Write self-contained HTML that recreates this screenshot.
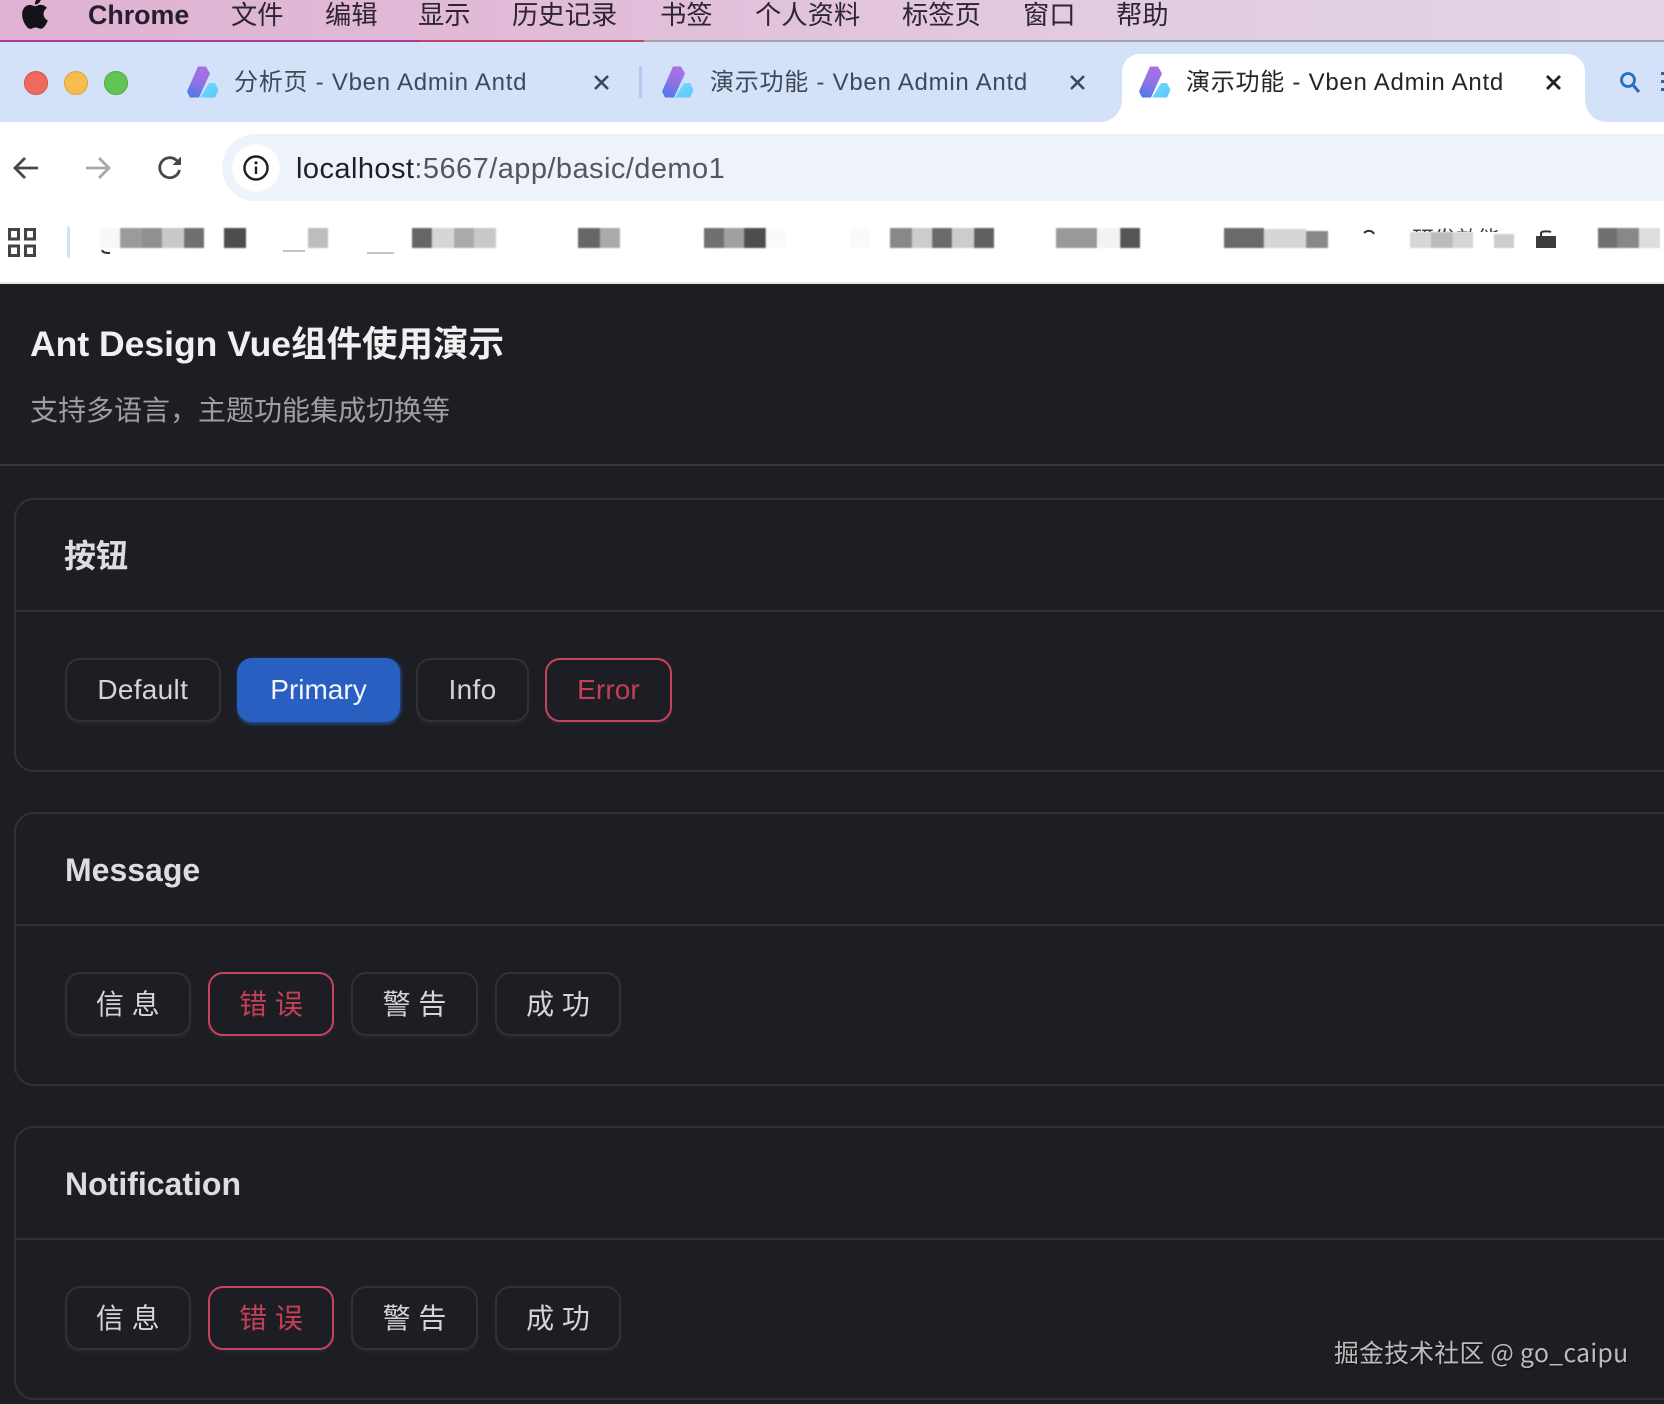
<!DOCTYPE html>
<html lang="zh-CN">
<head>
<meta charset="utf-8">
<title>Ant Design Vue组件使用演示</title>
<style>
html,body{margin:0;padding:0;background:#1c1e23}
#p{position:relative;width:1664px;height:1404px;overflow:hidden;background:#1c1e23;font-family:"Liberation Sans","Noto Sans CJK SC",sans-serif;filter:blur(.35px)}
#p div,#p svg{position:absolute}
.t{white-space:nowrap}
.m{top:-4px;height:38px;line-height:38px;font-size:26.3px;color:#2d2530}
.tab{top:64px;height:38px;line-height:38px;font-size:24px;letter-spacing:.75px;color:#414855}
.btn{box-sizing:border-box;display:flex;align-items:center;justify-content:center;height:64px;border:2px solid #303237;border-radius:15px;color:#d4d5d6;font-size:28px;white-space:pre;box-shadow:0 3px 2px rgba(255,255,255,.035)}
.c{padding-bottom:2px}
.err{border-color:#c9435f;color:#c53f58}
.card{box-sizing:border-box;left:14px;width:1700px;border:2px solid #303237;border-radius:20px}
.line{left:14px;width:1650px;height:2px;background:#303237}
.h{left:65px;height:44px;line-height:44px;font-size:32px;font-weight:700;color:#dcddde;white-space:nowrap}
</style>
</head>
<body>
<div id="p">
  <!-- menu bar -->
  <div style="left:0;top:0;width:1664px;height:41px;background:linear-gradient(90deg,#e0b2d3 0%,#e1bcd8 35%,#e2cde2 70%,#e3d5e7 100%)"></div>
  <div style="left:0;top:40px;width:1664px;height:2px;background:linear-gradient(90deg,#a8379a 0,#a8379a 418px,#c0436d 420px,#c0436d 643px,#a3a3ad 645px,#a3a3ad 100%)"></div>
  <svg style="left:16px;top:-6px" width="38" height="38" viewBox="0 0 24 24"><path fill="#15131a" d="M18.71 19.5c-.83 1.24-1.71 2.45-3.05 2.47-1.34.03-1.77-.79-3.29-.79-1.53 0-2 .77-3.27.82-1.31.05-2.3-1.32-3.14-2.53C4.25 17 2.94 12.45 4.7 9.39c.87-1.52 2.43-2.48 4.12-2.51 1.28-.02 2.5.87 3.29.87.78 0 2.26-1.07 3.81-.91.65.03 2.47.26 3.64 1.98-.09.06-2.17 1.28-2.15 3.81.03 3.02 2.65 4.03 2.68 4.04-.03.07-.42 1.44-1.38 2.83M13 3.5c.73-.83 1.94-1.46 2.94-1.5.13 1.17-.34 2.35-1.04 3.19-.69.85-1.83 1.51-2.95 1.42-.15-1.15.41-2.35 1.05-3.11z"/></svg>
  <div class="t m" style="left:88px;font-weight:700;font-size:26.8px;color:#251f2a">Chrome</div>
  <div class="t m" style="left:231px">文件</div>
  <div class="t m" style="left:325px">编辑</div>
  <div class="t m" style="left:418px">显示</div>
  <div class="t m" style="left:512px">历史记录</div>
  <div class="t m" style="left:660px">书签</div>
  <div class="t m" style="left:755px">个人资料</div>
  <div class="t m" style="left:902px">标签页</div>
  <div class="t m" style="left:1023px">窗口</div>
  <div class="t m" style="left:1116px">帮助</div>

  <!-- tab strip -->
  <div style="left:0;top:42px;width:1664px;height:80px;background:#d3e2f9"></div>
  <div style="left:0;top:122px;width:1664px;height:161px;background:#fff"></div>
  <div style="left:24px;top:71px;width:24px;height:24px;border-radius:50%;background:#ee6a5f;box-shadow:inset 0 0 0 1px #d65a50"></div>
  <div style="left:64px;top:71px;width:24px;height:24px;border-radius:50%;background:#f5bd4f;box-shadow:inset 0 0 0 1px #dca63f"></div>
  <div style="left:104px;top:71px;width:24px;height:24px;border-radius:50%;background:#61c454;box-shadow:inset 0 0 0 1px #52ae46"></div>

  <svg width="0" height="0" style="left:0;top:0"><defs>
    <linearGradient id="g1" x1=".6" y1="0" x2=".3" y2="1"><stop offset="0" stop-color="#ac6fe3"/><stop offset=".5" stop-color="#8f73e6"/><stop offset="1" stop-color="#4f78ea"/></linearGradient>
    <linearGradient id="g2" x1="0" y1="0" x2="1" y2="1"><stop offset="0" stop-color="#72ddff"/><stop offset="1" stop-color="#5cc6fb"/></linearGradient>
  </defs></svg>

  <svg style="left:187px;top:66px" width="32" height="32" viewBox="0 0 32 32"><path fill="url(#g2)" d="M22 17h6l3.5 7-3.5 7.5H13z"/><path fill="url(#g1)" d="M11 .5h8l4 7-11 24H3L0 25.500z"/></svg>
  <div class="t tab" style="left:234px">分析页 - Vben Admin Antd</div>
  <svg style="left:592px;top:73px" width="19" height="19" viewBox="0 0 19 19"><path d="M3 3l13 13M16 3L3 16" stroke="#3f4653" stroke-width="2.6" fill="none"/></svg>
  <div style="left:638.500px;top:66px;width:3px;height:32px;background:#b3c9ee"></div>

  <svg style="left:662px;top:66px" width="32" height="32" viewBox="0 0 32 32"><path fill="url(#g2)" d="M22 17h6l3.500 7-3.500 7.500H13z"/><path fill="url(#g1)" d="M11 .5h8l4 7-11 24H3L0 25.500z"/></svg>
  <div class="t tab" style="left:710px">演示功能 - Vben Admin Antd</div>
  <svg style="left:1068px;top:73px" width="19" height="19" viewBox="0 0 19 19"><path d="M3 3l13 13M16 3L3 16" stroke="#3f4653" stroke-width="2.600" fill="none"/></svg>

  <!-- active tab -->
  <svg style="left:1100px;top:54px" width="510" height="68" viewBox="0 0 510 68"><path fill="#fff" d="M0 68c12 0 22-9 22-24V18C22 8 30 0 40 0h427c10 0 18 8 18 18v26c0 15 10 24 22 24z"/></svg>
  <svg style="left:1138.500px;top:66px" width="32" height="32" viewBox="0 0 32 32"><path fill="url(#g2)" d="M22 17h6l3.500 7-3.500 7.500H13z"/><path fill="url(#g1)" d="M11 .5h8l4 7-11 24H3L0 25.500z"/></svg>
  <div class="t tab" style="left:1186px;color:#23252a">演示功能 - Vben Admin Antd</div>
  <svg style="left:1544px;top:73px" width="19" height="19" viewBox="0 0 19 19"><path d="M3 3l13 13M16 3L3 16" stroke="#1f2126" stroke-width="2.800" fill="none"/></svg>
  <svg style="left:1618px;top:70px" width="24" height="24" viewBox="0 0 24 24"><circle cx="10" cy="10" r="6.500" fill="none" stroke="#2a6cc4" stroke-width="2.800"/><path d="M15 15l6 7" stroke="#2a6cc4" stroke-width="3" fill="none"/></svg>
  <div style="left:1661px;top:72px;width:3px;height:3px;background:#3a5f98"></div>
  <div style="left:1661px;top:80px;width:3px;height:3px;background:#3a5f98"></div>
  <div style="left:1661px;top:88px;width:3px;height:3px;background:#3a5f98"></div>

  <!-- toolbar -->
  <svg style="left:12px;top:155px" width="28" height="26" viewBox="0 0 28 26"><path d="M26 13H4M13 3L3 13l10 10" fill="none" stroke="#45474a" stroke-width="2.800"/></svg>
  <svg style="left:84px;top:155px" width="28" height="26" viewBox="0 0 28 26"><path d="M2 13h22M15 3l10 10-10 10" fill="none" stroke="#a6a8aa" stroke-width="2.800"/></svg>
  <svg style="left:156px;top:154px" width="28" height="28" viewBox="0 0 28 28"><path d="M23.500 16a10 10 0 1 1-2.800-9.500L24 9.500" fill="none" stroke="#45474a" stroke-width="2.800"/><path d="M25 2.500V11h-8.500z" fill="#45474a"/></svg>
  <div style="left:222px;top:134px;width:1500px;height:67px;border-radius:34px;background:#eef2fa"></div>
  <div style="left:232px;top:144px;width:48px;height:48px;border-radius:50%;background:#fff"></div>
  <svg style="left:242px;top:154px" width="28" height="28" viewBox="0 0 28 28"><circle cx="14" cy="14" r="11.500" fill="none" stroke="#1d1f22" stroke-width="2.400"/><path d="M14 12.500v7.500" stroke="#1d1f22" stroke-width="2.400"/><circle cx="14" cy="8.800" r="1.600" fill="#1d1f22"/></svg>
  <div class="t" style="left:296px;top:149px;height:40px;line-height:40px;font-size:29px;letter-spacing:.44px;color:#54575c"><span style="color:#1e2023">localhost</span>:5667/app/basic/demo1</div>

  <!-- bookmarks -->
  <svg style="left:8px;top:228px" width="28" height="29" viewBox="0 0 28 29"><g fill="none" stroke="#444" stroke-width="3"><rect x="1.500" y="1.500" width="9" height="9.500"/><rect x="17.500" y="1.500" width="9" height="9.500"/><rect x="1.500" y="18" width="9" height="9.500"/><rect x="17.500" y="18" width="9" height="9.500"/></g></svg>
  <div style="left:66.500px;top:226px;width:3px;height:32px;border-radius:2px;background:#d3e2f9"></div>
  <svg style="left:0;top:222px" width="1664" height="40" viewBox="0 222 1664 40">
    <defs><filter id="b" x="-5%" y="-20%" width="110%" height="140%"><feGaussianBlur stdDeviation=".8"/></filter></defs>
    <g filter="url(#b)">
      <rect x="100" y="228" width="20" height="20" fill="#f8f8f8"/>
      <rect x="120" y="228" width="22" height="20" fill="#9b9b9b"/><rect x="142" y="228" width="20" height="20" fill="#909090"/><rect x="162" y="228" width="22" height="20" fill="#c8c8c8"/><rect x="184" y="228" width="20" height="20" fill="#707070"/>
      <rect x="224" y="228" width="22" height="20" fill="#4d4d4d"/>
      <rect x="308" y="228" width="20" height="20" fill="#bdbdbd"/>
      <rect x="412" y="228" width="20" height="20" fill="#666"/><rect x="432" y="228" width="22" height="20" fill="#d6d6d6"/><rect x="454" y="228" width="20" height="20" fill="#aaa"/><rect x="474" y="228" width="22" height="20" fill="#c8c8c8"/>
      <rect x="578" y="228" width="22" height="20" fill="#666"/><rect x="600" y="228" width="20" height="20" fill="#aaa"/>
      <rect x="704" y="228" width="20" height="20" fill="#707070"/><rect x="724" y="228" width="20" height="20" fill="#a0a0a0"/><rect x="744" y="228" width="22" height="20" fill="#4d4d4d"/><rect x="766" y="228" width="20" height="20" fill="#fafafa"/>
      <rect x="850" y="228" width="20" height="20" fill="#fafafa"/>
      <rect x="890" y="228" width="22" height="20" fill="#888"/><rect x="912" y="228" width="20" height="20" fill="#ccc"/><rect x="932" y="228" width="20" height="20" fill="#6a6a6a"/><rect x="952" y="228" width="22" height="20" fill="#ccc"/><rect x="974" y="228" width="20" height="20" fill="#606060"/>
      <rect x="1056" y="228" width="41" height="20" fill="#999"/><rect x="1097" y="228" width="23" height="20" fill="#f3f3f3"/><rect x="1120" y="228" width="20" height="20" fill="#555"/>
      <rect x="1224" y="228" width="40" height="20" fill="#6a6a6a"/><rect x="1264" y="229" width="42" height="19" fill="#d6d6d6"/><rect x="1306" y="231" width="22" height="17" fill="#888"/>
      <rect x="1410" y="232" width="21" height="16" fill="#d6d6d6"/><rect x="1431" y="232" width="22" height="16" fill="#bbb"/><rect x="1453" y="232" width="20" height="16" fill="#d6d6d6"/><rect x="1494" y="234" width="20" height="14" fill="#ccc"/>
      <rect x="1598" y="228" width="19" height="20" fill="#707070"/><rect x="1617" y="228" width="22" height="20" fill="#888"/><rect x="1639" y="228" width="21" height="20" fill="#ddd"/>
    </g>
    <path d="M102 250c1 3 4 3 8 3" fill="none" stroke="#333" stroke-width="2"/>
    <path d="M283 251h22M367 253h27" stroke="#888" stroke-width="1"/>
    <path d="M1364 233c3-3 8-3 10 1" fill="none" stroke="#333" stroke-width="2"/>
    <rect x="1536" y="236" width="20" height="12" fill="#3c3c3c"/>
    <path d="M1541 236v-3c0-2 8-2 10-1" fill="none" stroke="#333" stroke-width="2"/>
  </svg>
  <div class="t" style="left:1412px;top:227px;width:90px;height:5px;overflow:hidden;color:#444;font-size:22px;line-height:26px">研发效能</div>

  <!-- dark content -->
  <div style="left:0;top:282px;width:1664px;height:2px;background:#e6e6e6"></div>
  <div style="left:0;top:284px;width:1664px;height:1120px;background:#1c1e23"></div>

  <div class="t" style="left:30px;top:321px;height:46px;line-height:46px;font-size:35.5px;font-weight:700;color:#f0f0f1">Ant Design Vue组件使用演示</div>
  <div class="t" style="left:30px;top:391px;height:40px;line-height:40px;font-size:28px;color:#9f9fa1">支持多语言，主题功能集成切换等</div>
  <div style="left:0;top:464px;width:1664px;height:2px;background:#35373c"></div>

  <!-- card 1 -->
  <div class="card" style="top:498px;height:274px"></div>
  <div class="line" style="top:610px"></div>
  <div class="h" style="top:534px;left:64px">按钮</div>
  <div class="btn" style="left:64.500px;top:658px;width:156.500px;letter-spacing:.3px">Default</div>
  <div class="btn" style="left:237px;top:658px;width:163px;background:#2a5fc2;border-color:#2a5fc2;color:#f2f5fb;box-shadow:0 3px 2px #223f74,2px 0 2px #223f74">Primary</div>
  <div class="btn" style="left:416px;top:658px;width:113px;letter-spacing:.3px">Info</div>
  <div class="btn err" style="left:545px;top:658px;width:127px;letter-spacing:.1px">Error</div>

  <!-- card 2 -->
  <div class="card" style="top:812px;height:274px"></div>
  <div class="line" style="top:924px"></div>
  <div class="h" style="top:848px">Message</div>
  <div class="btn c" style="left:64.500px;top:972px;width:126.500px">信 息</div>
  <div class="btn err c" style="left:208px;top:972px;width:126px">错 误</div>
  <div class="btn c" style="left:351px;top:972px;width:127px">警 告</div>
  <div class="btn c" style="left:495px;top:972px;width:126px">成 功</div>

  <!-- card 3 -->
  <div class="card" style="top:1126px;height:274px"></div>
  <div class="line" style="top:1238px"></div>
  <div class="h" style="top:1162px">Notification</div>
  <div class="btn c" style="left:64.500px;top:1286px;width:126.500px">信 息</div>
  <div class="btn err c" style="left:208px;top:1286px;width:126px">错 误</div>
  <div class="btn c" style="left:351px;top:1286px;width:127px">警 告</div>
  <div class="btn c" style="left:495px;top:1286px;width:126px">成 功</div>

  <!-- watermark -->
  <div class="t" style="left:1334px;top:1333px;height:38px;line-height:38px;font-size:24.8px;letter-spacing:.3px;font-family:'Noto Sans CJK SC','Liberation Sans',sans-serif;color:#bcbcbc;text-shadow:1px 1px 1px #111">掘金技术社区 @ go_caipu</div>
</div>
</body>
</html>
